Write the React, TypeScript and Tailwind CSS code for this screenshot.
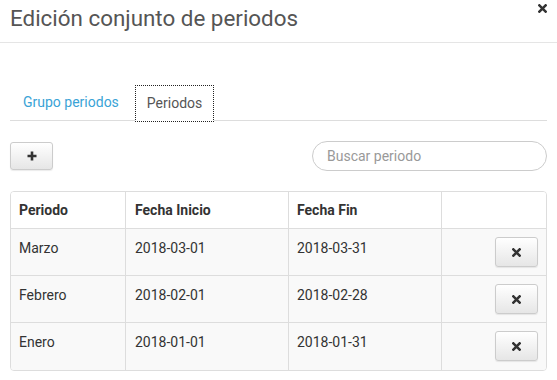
import React from "react";

const XIcon = ({ size = 9 }: { size?: number }) => (
  <svg width={size} height={size} viewBox="0 0 10 10">
    <path d="M1.5 1.5 L8.5 8.5 M8.5 1.5 L1.5 8.5" stroke="#333" strokeWidth="2.8" strokeLinecap="square" />
  </svg>
);

const PlusIcon = () => (
  <svg width="10" height="10" viewBox="0 0 10 10">
    <path d="M5 0.5 V9.5 M0.5 5 H9.5" stroke="#333" strokeWidth="2.6" />
  </svg>
);

const rows = [
  { p: "Marzo", i: "2018-03-01", f: "2018-03-31" },
  { p: "Febrero", i: "2018-02-01", f: "2018-02-28" },
  { p: "Enero", i: "2018-01-01", f: "2018-01-31" },
];

export default function App() {
  return (
    <div
      className="w-[557px] h-[380px] bg-white overflow-hidden text-[#333]"
      style={{ fontFamily: "Roboto, 'Liberation Sans', sans-serif" }}
    >
      <div className="h-[43px] border-b border-[#e5e5e5] flex items-start justify-between pl-[10px] pr-[10px]">
        <h1 className="text-[22.4px] leading-[28px] mt-[4px] text-[#555] font-normal">Edición conjunto de periodos</h1>
        <div className="mt-[4px]">
          <XIcon size={9} />
        </div>
      </div>
      <div className="px-[10px]">
        <div className="mt-[42px] flex border-b border-[#ddd] h-[36px] pl-[1px]">
          <div className="px-[12px] flex items-center text-[14px] text-[#3aa3d6] mr-[4px]">Grupo periodos</div>
          <div className="px-[11px] flex items-center text-[14px] text-[#555] bg-white border border-dotted border-[#222] -mb-px h-[37px]">
            Periodos
          </div>
        </div>
        <div className="mt-[20px] flex items-center justify-between">
          <button className="w-[43px] h-[28px] rounded-[3px] border border-[#ccc] bg-gradient-to-b from-white to-[#e6e6e6] shadow-[0_1px_1px_rgba(0,0,0,0.08)] flex items-center justify-center">
            <PlusIcon />
          </button>
          <div className="w-[235px] h-[30px] rounded-full border border-[#ccc] flex items-center pl-[14px] text-[14px] text-[#999]">
            Buscar periodo
          </div>
        </div>
        <div className="mt-[20px] border border-[#ddd] rounded-[4px] overflow-hidden">
          <div className="grid grid-cols-[114px_163px_153px_1fr] h-[37px] bg-white border-b border-[#ddd]">
            <div className="pl-[8px] flex items-center font-bold text-[14px]">Periodo</div>
            <div className="pl-[9px] flex items-center font-bold text-[14px] border-l border-[#ddd]">Fecha Inicio</div>
            <div className="pl-[8px] flex items-center font-bold text-[14px] border-l border-[#ddd]">Fecha Fin</div>
            <div className="border-l border-[#ddd]" />
          </div>
          {rows.map((r, idx) => (
            <div
              key={r.p}
              className={`grid grid-cols-[114px_163px_153px_1fr] h-[47px] bg-[#f9f9f9] ${idx < 2 ? "border-b border-[#ddd]" : ""}`}
            >
              <div className="pl-[8px] pt-[9px] text-[14px] leading-[20px]">{r.p}</div>
              <div className="pl-[9px] pt-[9px] text-[14px] leading-[20px] border-l border-[#ddd]">{r.i}</div>
              <div className="pl-[8px] pt-[9px] text-[14px] leading-[20px] border-l border-[#ddd]">{r.f}</div>
              <div className="border-l border-[#ddd] flex justify-end items-start pr-[8px] pt-[8px]">
                <button className="w-[43px] h-[30px] rounded-[3px] border border-[#ccc] bg-gradient-to-b from-white to-[#e6e6e6] shadow-[0_1px_1px_rgba(0,0,0,0.08)] flex items-center justify-center">
                  <XIcon size={9} />
                </button>
              </div>
            </div>
          ))}
        </div>
      </div>
    </div>
  );
}
